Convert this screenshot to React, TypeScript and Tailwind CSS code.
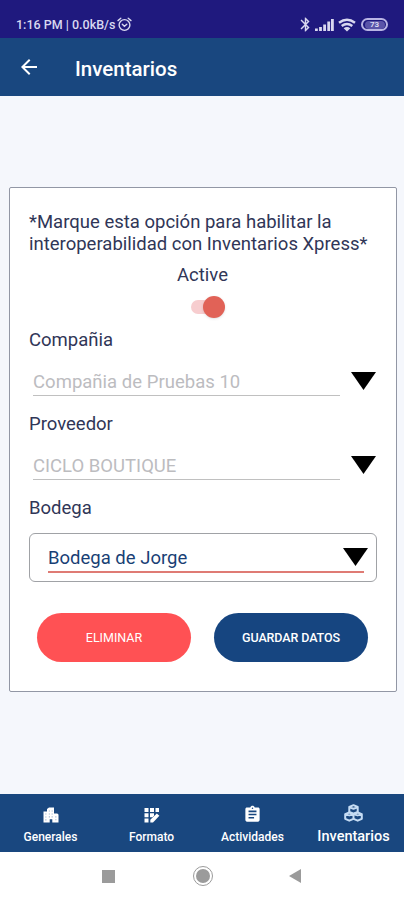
import type { ReactNode } from 'react';
import { MdArrowBack, MdAssignment, MdBluetooth } from 'react-icons/md';

function AlarmIcon() {
  return (
    <svg className="h-[15px] w-[15px]" viewBox="0 0 15 15" fill="none" stroke="currentColor" strokeWidth="1.4" strokeLinecap="round">
      <circle cx="7.5" cy="8" r="5.4" />
      <path d="M1 3.6 3.8 1.3M14 3.6 11.2 1.3M5.3 7.2 7.4 9.2 9.8 7.2" />
    </svg>
  );
}

function SignalIcon() {
  return (
    <svg className="h-[13px] w-[19px]" viewBox="0 0 19 13" fill="currentColor">
      <rect x="0" y="10.5" width="2.8" height="2.5" />
      <rect x="4.1" y="9" width="2.8" height="4" />
      <rect x="8.2" y="6.5" width="2.8" height="6.5" />
      <rect x="12.3" y="3.5" width="2.8" height="9.5" />
      <rect x="16" y="1" width="2.8" height="12" />
    </svg>
  );
}

function WifiIcon() {
  return (
    <svg className="h-[14px] w-[18px]" viewBox="0 0 18 14" fill="none" stroke="currentColor" strokeWidth="2.4">
      <path d="M1 4.8Q9-1.2 17 4.8M3.7 8Q9 3.9 14.3 8" />
      <path d="M9 13.5 5.6 10.2Q9 7.8 12.4 10.2Z" fill="currentColor" stroke="none" />
    </svg>
  );
}

function BuildingIcon() {
  return (
    <svg className="h-[16px] w-[16px]" viewBox="0 0 16 16">
      <path d="M0.5 4.5H4V2L6 0.5H11V6.5H14Q15.5 6.5 15.5 8V15.5H9.3V12.3H6.7V15.5H0.5Z" fill="currentColor" />
      <path
        d="M2.3 6.5h1.1v1.1H2.3zM2.3 9.4h1.1v1.1H2.3zM2.3 12.3h1.1v1.1H2.3zM5.8 3.5h1.1v1.1H5.8zM8.6 3.5h1.1v1.1H8.6zM5.8 6.4h1.1v1.1H5.8zM8.6 6.4h1.1v1.1H8.6zM5.8 9.3h1.1v1.1H5.8zM8.6 9.3h1.1v1.1H8.6zM12.3 9.3h1.1v1.1h-1.1zM12.3 12.2h1.1v1.1h-1.1z"
        fill="#9db3cd"
      />
    </svg>
  );
}

function FormIcon() {
  return (
    <svg className="h-[16px] w-[16px]" viewBox="0 0 16 16" fill="currentColor">
      <path d="M0.5 1h4v4h-4zM6 1h4v4H6zM11.5 1h3.5v4h-3.5zM0.5 6.3h4v4h-4zM6 6.3h4v2.5l-1.5 1.5H6zM0.5 11.5h4v4h-4z" />
      <path d="M6.3 12.8 12.8 6.5 15.4 8.8 9 15.5H6.3Z" />
    </svg>
  );
}

function BoxesIcon() {
  return (
    <svg className="h-[18px] w-[19px]" viewBox="0 0 19 18" fill="none" stroke="currentColor" strokeWidth="2" strokeLinejoin="round">
      <path d="M5.3 3 9.5 1.2 13.7 3V8L9.5 9.6 5.3 8ZM5.5 3.4 9.5 4.8 13.5 3.4" />
      <path d="M1.2 10.2 5.3 8.5 9.5 10.2V14.8L5.3 16.7 1.2 14.8ZM1.2 10.4 5.3 11.4 9.5 10.4" />
      <path d="M9.5 10.2 13.7 8.5 17.8 10.2V14.8L13.7 16.7 9.5 14.8M9.5 10.4 13.7 11.4 17.8 10.4" />
    </svg>
  );
}

function Caret() {
  return (
    <svg className="h-[18px] w-[25px] shrink-0" viewBox="0 0 25 18">
      <path d="M0 0H25L12.5 18Z" fill="#000" />
    </svg>
  );
}

function DisabledSelect({ label, value, valueClass }: { label: string; value: string; valueClass: string }) {
  return (
    <div className="h-[84px]">
      <div className="h-[26px] text-[18.5px] leading-[22px]">{label}</div>
      <div className="flex pl-[4px]">
        <div className="h-[41px] w-[307px] border-b border-[#c0c0c0] pt-[16px]">
          <span className={`block text-[18.5px] leading-[22px] text-[#bcbcbf] ${valueClass}`}>{value}</span>
        </div>
        <div className="ml-[11px] pt-[17px]">
          <Caret />
        </div>
      </div>
    </div>
  );
}

function Tab({ icon, label, active }: { icon: ReactNode; label: string; active?: boolean }) {
  return (
    <div className="flex w-[101px] flex-col items-center">
      <div className={active ? 'mt-[10px] h-5 text-[#c5dcf4]' : 'mt-[13px] h-[18px]'}>{icon}</div>
      <span className={active ? 'text-[14.5px] leading-[26px] font-medium' : 'text-[12px] leading-[24px] font-medium'}>{label}</span>
    </div>
  );
}

export default function App() {
  return (
    <div className="flex h-[900px] w-[404px] flex-col overflow-hidden bg-[#f5f7fc] font-['Roboto',sans-serif] text-[#303657]">
      {/* Phone status bar */}
      <div className="flex h-[38px] shrink-0 items-center bg-[#1f197e] pt-[11px] pl-4 text-[#d9d8f0]">
        <span className="text-[12.5px] leading-4 font-medium">1:16 PM | 0.0kB/s</span>
        <div className="ml-[2px]">
          <AlarmIcon />
        </div>
        <div className="mr-[16px] ml-auto flex items-center">
          <MdBluetooth className="mr-[1px] size-[17px]" />
          <SignalIcon />
          <div className="ml-[4px]">
            <WifiIcon />
          </div>
          <div className="ml-[5px] flex h-[13px] w-[27px] items-center justify-center rounded-full border-2 border-[#b9b5e4]">
            <span className="flex h-[8px] w-[20px] items-center justify-center rounded-full bg-[#5a54a8] text-[8px] leading-none font-bold">73</span>
          </div>
        </div>
      </div>

      <header className="flex h-[58px] shrink-0 items-center bg-[#19477f] pl-[17px] text-white">
        <MdArrowBack className="size-[24px]" />
        <h1 className="mt-[4px] ml-[34px] text-[20.5px] leading-6 font-medium">Inventarios</h1>
      </header>

      <main className="flex-1 pt-[91px] pl-[9px]">
        <div className="h-[505px] w-[388px] rounded-[2px] border-[1.5px] border-[#9297a5] bg-white px-[19px] pt-[23px]">
          <p className="text-[18.5px] leading-[22px] whitespace-nowrap">
            *Marque esta opción para habilitar la
            <br />
            interoperabilidad con Inventarios Xpress*
          </p>

          <div className="mt-[9px] flex h-[65px] flex-col items-center pr-[1px]">
            <span className="text-[18.5px] leading-[22px]">Active</span>
            <div className="mt-[10px] ml-[10px] flex h-[22px] w-[34px] items-center rounded-full">
              <div className="h-[14px] w-[25px] shrink-0 rounded-full bg-[#f7cdcf]" />
              <div className="-ml-[13px] size-[22px] shrink-0 rounded-full bg-[#e16257] shadow-sm" />
            </div>
          </div>

          <DisabledSelect label="Compañia" value="Compañia de Pruebas 10" valueClass="tracking-[0.02px]" />
          <DisabledSelect label="Proveedor" value="CICLO BOUTIQUE" valueClass="" />

          <div className="text-[18.5px] leading-[22px]">Bodega</div>
          <div className="mt-[14px] h-[49px] w-[348px] rounded-[6px] border border-[#a0a2a6] pt-[12px] pl-[18px]">
            <div className="flex h-[25px] w-[316px] justify-between">
              <span className="pt-px text-[18.5px] leading-[23px] whitespace-nowrap text-[#193f75]">Bodega de Jorge</span>
              <div className="-mr-[4px] pt-[2px]">
                <Caret />
              </div>
            </div>
            <div className="h-[2px] w-[316px] bg-[#df7b74]" />
          </div>

          <div className="mt-[31px] flex gap-[23px] pl-2 text-[12.5px] text-white">
            <button className="h-[49px] w-[154px] rounded-full bg-[#ff5154] pt-[2px]">ELIMINAR</button>
            <button className="h-[49px] w-[154px] rounded-full bg-[#164580] pt-[2px] tracking-[-0.1px] font-medium">GUARDAR DATOS</button>
          </div>
        </div>
      </main>

      <nav className="flex h-[58px] shrink-0 bg-[#19477f] text-white">
        <Tab icon={<BuildingIcon />} label="Generales" />
        <Tab icon={<FormIcon />} label="Formato" />
        <Tab icon={<MdAssignment className="-mt-[2px] size-[19px]" />} label="Actividades" />
        <Tab icon={<BoxesIcon />} label="Inventarios" active />
      </nav>

      {/* Android navigation buttons */}
      <div className="flex h-12 shrink-0 items-center bg-white pl-[102px]">
        <div className="size-[13px] bg-[#9b9b9b]" />
        <div className="ml-[78px] flex size-[20px] items-center justify-center rounded-full border-[1.5px] border-[#9b9b9b]">
          <div className="size-[14px] rounded-full bg-[#9b9b9b]" />
        </div>
        <svg className="ml-[76px] h-[14px] w-[12px]" viewBox="0 0 12 14">
          <path d="M12 0V14L0 7Z" fill="#9b9b9b" />
        </svg>
      </div>
    </div>
  );
}
